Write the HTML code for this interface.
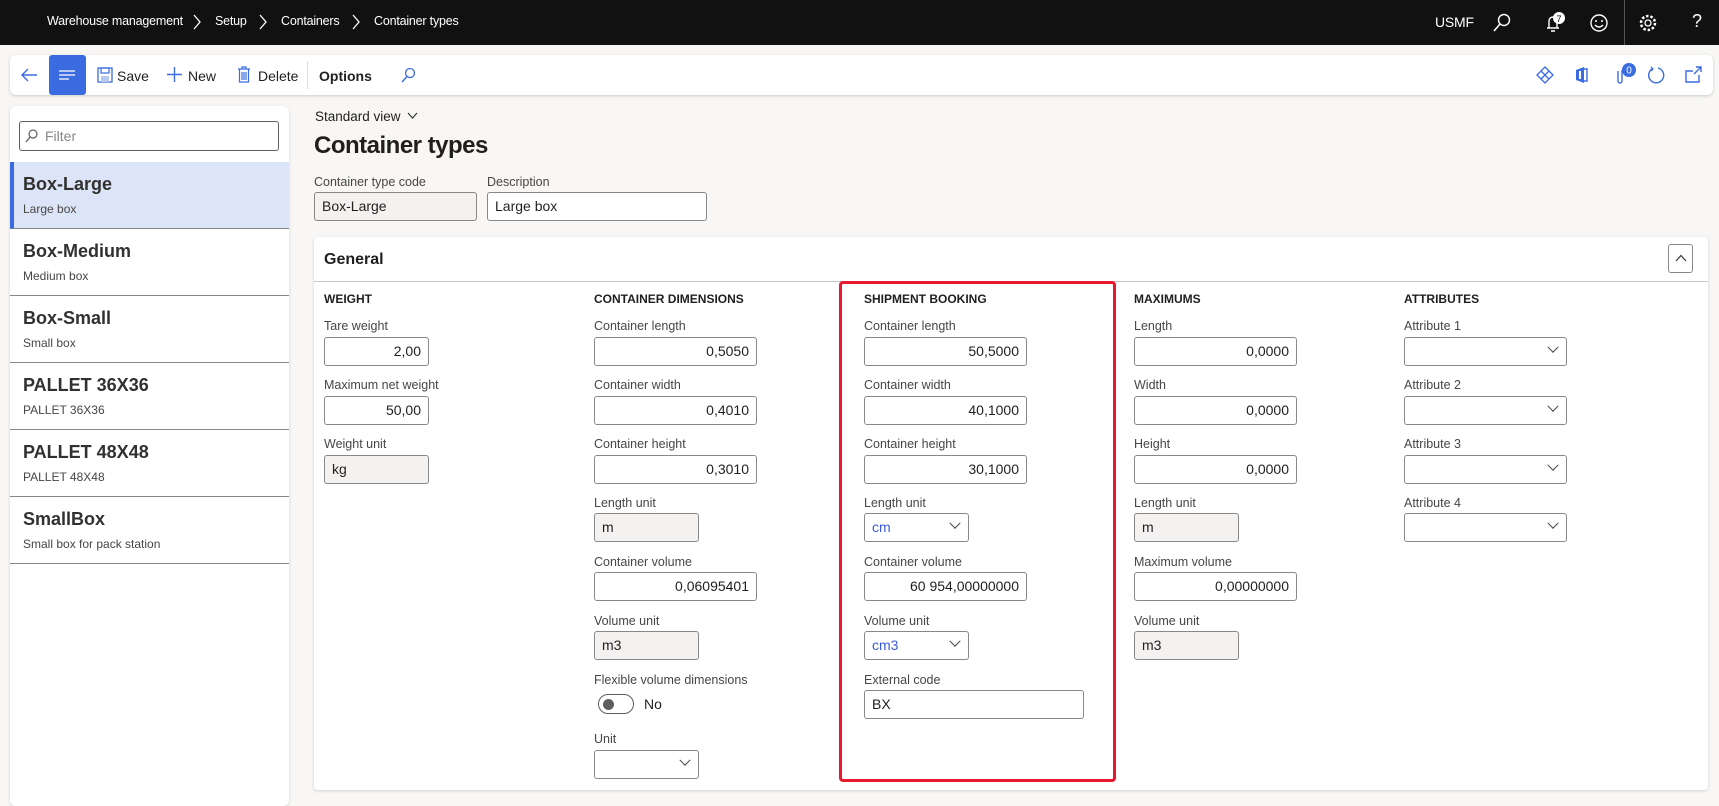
<!DOCTYPE html>
<html><head><meta charset="utf-8">
<style>
*{box-sizing:border-box;margin:0;padding:0}
body{width:1719px;height:803px;background:#f8f7f5;font-family:"Liberation Sans",sans-serif;position:relative;overflow:hidden;color:#201f1e}
.a{position:absolute}
.top{left:0;top:0;width:1719px;height:45px;background:#111}
.top .t{color:#fff;font-size:12.5px;top:14px;letter-spacing:-.2px}
.tb{left:10px;top:55px;width:1703px;height:40px;background:#fff;border-radius:6px;box-shadow:0 1px 3px rgba(0,0,0,.18)}
.tbt{font-size:14px;top:13px;color:#201f1e}
.lp{left:10px;top:106px;width:279px;height:700px;background:#fff;border-radius:6px;box-shadow:0 1px 3px rgba(0,0,0,.15)}
.item{left:10px;width:279px;height:67px;border-bottom:1px solid #8a8886}
.item .h{position:absolute;left:13px;top:12px;font-size:18px;font-weight:bold;color:#323130}
.item .s{position:absolute;left:13px;top:40px;font-size:12px;color:#484644}
.lbl{font-size:12.5px;color:#484644}
.sec{font-size:12px;font-weight:bold;color:#201f1e}
.in{height:29px;border:1px solid #8a8886;border-radius:3px;background:#fff;font-size:14px;line-height:27px;padding:0 7px}
.r{text-align:right}
.ro{background:#f3f2f1}
.dd{color:#3b5bdb}
.chev{position:absolute;right:9px;top:8px;width:8px;height:8px;border-right:1.3px solid #444;border-bottom:1.3px solid #444;transform:rotate(45deg) translate(-2px,-2px)}
</style></head><body>
<div class="a top">
 <div class="a t" style="left:47px">Warehouse management</div>
 <svg class="a" style="left:193px;top:14px" width="8" height="16"><path d="M1 1l6 7-6 7" stroke="#fff" fill="none" stroke-width="1.3"/></svg>
 <div class="a t" style="left:215px">Setup</div>
 <svg class="a" style="left:259px;top:14px" width="8" height="16"><path d="M1 1l6 7-6 7" stroke="#fff" fill="none" stroke-width="1.3"/></svg>
 <div class="a t" style="left:281px">Containers</div>
 <svg class="a" style="left:352px;top:14px" width="8" height="16"><path d="M1 1l6 7-6 7" stroke="#fff" fill="none" stroke-width="1.3"/></svg>
 <div class="a t" style="left:374px">Container types</div>
 <div class="a t" style="left:1435px;font-size:14px">USMF</div>
 <svg class="a" style="left:1492px;top:13px" width="20" height="20"><circle cx="12" cy="7" r="5.5" stroke="#fff" fill="none" stroke-width="1.4"/><path d="M8 11l-6 7" stroke="#fff" stroke-width="1.6"/></svg>
 <svg class="a" style="left:1543px;top:12px" width="22" height="22"><path d="M4 16h12M6 16V9a4 4 0 0 1 8 0v7M8 19h4" stroke="#fff" fill="none" stroke-width="1.4"/><circle cx="16" cy="6" r="6" fill="#fff"/><text x="16" y="10" font-size="9" text-anchor="middle" font-family="Liberation Sans">7</text></svg>
 <svg class="a" style="left:1589px;top:13px" width="20" height="20"><circle cx="10" cy="10" r="8" stroke="#fff" fill="none" stroke-width="1.4"/><circle cx="7" cy="8" r="1" fill="#fff"/><circle cx="13" cy="8" r="1" fill="#fff"/><path d="M6 12q4 4 8 0" stroke="#fff" fill="none" stroke-width="1.3"/></svg>
 <div class="a" style="left:1624px;top:0;width:1px;height:45px;background:#555"></div>
 <svg class="a" style="left:1638px;top:13px" width="20" height="20"><circle cx="10" cy="10" r="3" stroke="#fff" fill="none" stroke-width="1.3"/><circle cx="10" cy="10" r="7" stroke="#fff" fill="none" stroke-width="2.5" stroke-dasharray="2.5 1.9"/></svg>
 <div class="a t" style="left:1692px;top:11px;font-size:18px">?</div>
</div>

<div class="a tb">
 <svg class="a" style="left:10px;top:12px" width="18" height="16"><path d="M17 8H2M8 2L2 8l6 6" stroke="#3b6be0" fill="none" stroke-width="1.4"/></svg>
 <div class="a" style="left:39px;top:0;width:37px;height:40px;background:#3b6be0;border-radius:3px"></div>
 <svg class="a" style="left:48px;top:13px" width="18" height="14"><path d="M1 3h16M1 7h16M1 11h10" stroke="#fff" stroke-width="1.3"/></svg>
 <svg class="a" style="left:87px;top:12px" width="16" height="16"><rect x="1" y="1" width="14" height="14" fill="none" stroke="#3b6be0" stroke-width="1.3"/><rect x="4" y="1" width="8" height="5" fill="none" stroke="#3b6be0" stroke-width="1.2"/><rect x="4" y="9" width="8" height="6" fill="#b7c8f3"/></svg>
 <div class="a tbt" style="left:107px">Save</div>
 <svg class="a" style="left:156px;top:11px" width="17" height="17"><path d="M8.5 1v15M1 8.5h15" stroke="#3b6be0" stroke-width="1.4"/></svg>
 <div class="a tbt" style="left:178px">New</div>
 <svg class="a" style="left:227px;top:11px" width="14" height="17"><path d="M1 3h12M5 3V1h4v2M2.5 3v13h9V3M5 6v8M7 6v8M9 6v8" stroke="#3b6be0" fill="none" stroke-width="1.2"/></svg>
 <div class="a tbt" style="left:248px">Delete</div>
 <div class="a" style="left:297px;top:6px;width:1px;height:28px;background:#ddd"></div>
 <div class="a tbt" style="left:309px;font-weight:bold">Options</div>
 <svg class="a" style="left:390px;top:12px" width="16" height="16"><circle cx="10" cy="6" r="4.5" stroke="#3b6be0" fill="none" stroke-width="1.3"/><path d="M7 9.5l-5 5.5" stroke="#3b6be0" stroke-width="1.4"/></svg>
 <svg class="a" style="left:1526px;top:11px" width="18" height="18"><path d="M9 1l4 4-4 4-4-4zM9 9l4 4-4 4-4-4zM5 5l4 4-4 4-4-4zM13 5l4 4-4 4-4-4z" stroke="#3b6be0" fill="none" stroke-width="1.3"/></svg>
 <svg class="a" style="left:1564px;top:11px" width="14" height="18"><path d="M2 4l8-3v16l-8-3z" fill="#3b6be0"/><path d="M10 3h3v12h-3" stroke="#3b6be0" fill="none" stroke-width="1.4"/><rect x="5" y="5" width="2" height="8" fill="#fff"/></svg>
 <svg class="a" style="left:1603px;top:8px" width="24" height="22"><path d="M5 8v10a2 2 0 0 0 4 0V7" stroke="#3b6be0" fill="none" stroke-width="1.4"/><circle cx="16" cy="7" r="7" fill="#3b6be0"/><text x="16" y="10.5" font-size="10" fill="#fff" text-anchor="middle" font-family="Liberation Sans">0</text></svg>
 <svg class="a" style="left:1637px;top:11px" width="18" height="18"><path d="M6 2.5A7.5 7.5 0 1 0 11 2" stroke="#3b6be0" fill="none" stroke-width="1.4"/><path d="M4 1l2 2-2 2" stroke="#3b6be0" fill="none" stroke-width="1.3"/></svg>
 <svg class="a" style="left:1674px;top:11px" width="18" height="18"><path d="M9 5H2v11h13V9M10 8l7-7M12 1h5v5" stroke="#3b6be0" fill="none" stroke-width="1.4"/></svg>
</div>

<div class="a lp"></div>
<div class="a" style="left:19px;top:121px;width:260px;height:30px;border:1px solid #605e5c;border-radius:3px;background:#fff"></div>
<svg class="a" style="left:25px;top:129px" width="13" height="14"><circle cx="8" cy="5" r="4" stroke="#605e5c" fill="none" stroke-width="1.2"/><path d="M5 8l-4 5" stroke="#605e5c" stroke-width="1.3"/></svg>
<div class="a" style="left:45px;top:128px;font-size:14px;color:#8a8886">Filter</div>
<div class="a item" style="top:162px;background:#dce5f8;border-left:4px solid #3b6be0"><div class="h" style="left:9px">Box-Large</div><div class="s" style="left:9px">Large box</div></div>
<div class="a item" style="top:229px"><div class="h">Box-Medium</div><div class="s">Medium box</div></div>
<div class="a item" style="top:296px"><div class="h">Box-Small</div><div class="s">Small box</div></div>
<div class="a item" style="top:363px"><div class="h">PALLET 36X36</div><div class="s">PALLET 36X36</div></div>
<div class="a item" style="top:430px"><div class="h">PALLET 48X48</div><div class="s">PALLET 48X48</div></div>
<div class="a item" style="top:497px"><div class="h">SmallBox</div><div class="s">Small box for pack station</div></div>

<div class="a" style="left:315px;top:109px;font-size:13.5px">Standard view</div>
<svg class="a" style="left:407px;top:112px" width="11" height="8"><path d="M1 1l4.5 5L10 1" stroke="#333" fill="none" stroke-width="1.2"/></svg>
<div class="a" style="left:314px;top:132px;font-size:24px;font-weight:bold;color:#201f1e;letter-spacing:-.5px">Container types</div>
<div class="a lbl" style="left:314px;top:175px">Container type code</div>
<div class="a lbl" style="left:487px;top:175px">Description</div>
<div class="a in ro" style="left:314px;top:192px;width:163px">Box-Large</div>
<div class="a in" style="left:487px;top:192px;width:220px">Large box</div>

<div class="a" style="left:314px;top:237px;width:1394px;height:553px;background:#fff;border-radius:4px;box-shadow:0 1px 3px rgba(0,0,0,.15)"></div>
<div class="a" style="left:324px;top:251px;font-size:16px;font-weight:bold">General</div>
<div class="a" style="left:1668px;top:244px;width:25px;height:29px;border:1px solid #8a8886;border-radius:3px"></div>
<svg class="a" style="left:1675px;top:254px" width="12" height="8"><path d="M1 7l5-5.5L11 7" stroke="#333" fill="none" stroke-width="1.2"/></svg>
<div class="a" style="left:314px;top:281px;width:1394px;height:1px;background:#c8c6c4"></div>

<div class="a" style="left:839px;top:281px;width:277px;height:501px;border:3px solid #e8192c;border-radius:4px"></div>

<div class="a sec" style="left:324px;top:292px">WEIGHT</div>
<div class="a lbl" style="left:324px;top:319px">Tare weight</div>
<div class="a in r" style="left:324px;top:337px;width:105px">2,00</div>
<div class="a lbl" style="left:324px;top:378px">Maximum net weight</div>
<div class="a in r" style="left:324px;top:396px;width:105px">50,00</div>
<div class="a lbl" style="left:324px;top:437px">Weight unit</div>
<div class="a in ro" style="left:324px;top:455px;width:105px">kg</div>

<div class="a sec" style="left:594px;top:292px">CONTAINER DIMENSIONS</div>
<div class="a lbl" style="left:594px;top:319px">Container length</div>
<div class="a in r" style="left:594px;top:337px;width:163px">0,5050</div>
<div class="a lbl" style="left:594px;top:378px">Container width</div>
<div class="a in r" style="left:594px;top:396px;width:163px">0,4010</div>
<div class="a lbl" style="left:594px;top:437px">Container height</div>
<div class="a in r" style="left:594px;top:455px;width:163px">0,3010</div>
<div class="a lbl" style="left:594px;top:496px">Length unit</div>
<div class="a in ro" style="left:594px;top:513px;width:105px">m</div>
<div class="a lbl" style="left:594px;top:555px">Container volume</div>
<div class="a in r" style="left:594px;top:572px;width:163px">0,06095401</div>
<div class="a lbl" style="left:594px;top:614px">Volume unit</div>
<div class="a in ro" style="left:594px;top:631px;width:105px">m3</div>
<div class="a lbl" style="left:594px;top:673px">Flexible volume dimensions</div>
<div class="a" style="left:598px;top:694px;width:36px;height:20px;border:1px solid #605e5c;border-radius:10px"></div>
<div class="a" style="left:603px;top:699px;width:11px;height:11px;border-radius:50%;background:#605e5c"></div>
<div class="a" style="left:644px;top:696px;font-size:14px">No</div>
<div class="a lbl" style="left:594px;top:732px">Unit</div>
<div class="a in" style="left:594px;top:750px;width:105px"><span class="chev"></span></div>

<div class="a sec" style="left:864px;top:292px">SHIPMENT BOOKING</div>
<div class="a lbl" style="left:864px;top:319px">Container length</div>
<div class="a in r" style="left:864px;top:337px;width:163px">50,5000</div>
<div class="a lbl" style="left:864px;top:378px">Container width</div>
<div class="a in r" style="left:864px;top:396px;width:163px">40,1000</div>
<div class="a lbl" style="left:864px;top:437px">Container height</div>
<div class="a in r" style="left:864px;top:455px;width:163px">30,1000</div>
<div class="a lbl" style="left:864px;top:496px">Length unit</div>
<div class="a in dd" style="left:864px;top:513px;width:105px">cm<span class="chev"></span></div>
<div class="a lbl" style="left:864px;top:555px">Container volume</div>
<div class="a in r" style="left:864px;top:572px;width:163px">60 954,00000000</div>
<div class="a lbl" style="left:864px;top:614px">Volume unit</div>
<div class="a in dd" style="left:864px;top:631px;width:105px">cm3<span class="chev"></span></div>
<div class="a lbl" style="left:864px;top:673px">External code</div>
<div class="a in" style="left:864px;top:690px;width:220px">BX</div>

<div class="a sec" style="left:1134px;top:292px">MAXIMUMS</div>
<div class="a lbl" style="left:1134px;top:319px">Length</div>
<div class="a in r" style="left:1134px;top:337px;width:163px">0,0000</div>
<div class="a lbl" style="left:1134px;top:378px">Width</div>
<div class="a in r" style="left:1134px;top:396px;width:163px">0,0000</div>
<div class="a lbl" style="left:1134px;top:437px">Height</div>
<div class="a in r" style="left:1134px;top:455px;width:163px">0,0000</div>
<div class="a lbl" style="left:1134px;top:496px">Length unit</div>
<div class="a in ro" style="left:1134px;top:513px;width:105px">m</div>
<div class="a lbl" style="left:1134px;top:555px">Maximum volume</div>
<div class="a in r" style="left:1134px;top:572px;width:163px">0,00000000</div>
<div class="a lbl" style="left:1134px;top:614px">Volume unit</div>
<div class="a in ro" style="left:1134px;top:631px;width:105px">m3</div>

<div class="a sec" style="left:1404px;top:292px">ATTRIBUTES</div>
<div class="a lbl" style="left:1404px;top:319px">Attribute 1</div>
<div class="a in" style="left:1404px;top:337px;width:163px"><span class="chev"></span></div>
<div class="a lbl" style="left:1404px;top:378px">Attribute 2</div>
<div class="a in" style="left:1404px;top:396px;width:163px"><span class="chev"></span></div>
<div class="a lbl" style="left:1404px;top:437px">Attribute 3</div>
<div class="a in" style="left:1404px;top:455px;width:163px"><span class="chev"></span></div>
<div class="a lbl" style="left:1404px;top:496px">Attribute 4</div>
<div class="a in" style="left:1404px;top:513px;width:163px"><span class="chev"></span></div>
</body></html>
